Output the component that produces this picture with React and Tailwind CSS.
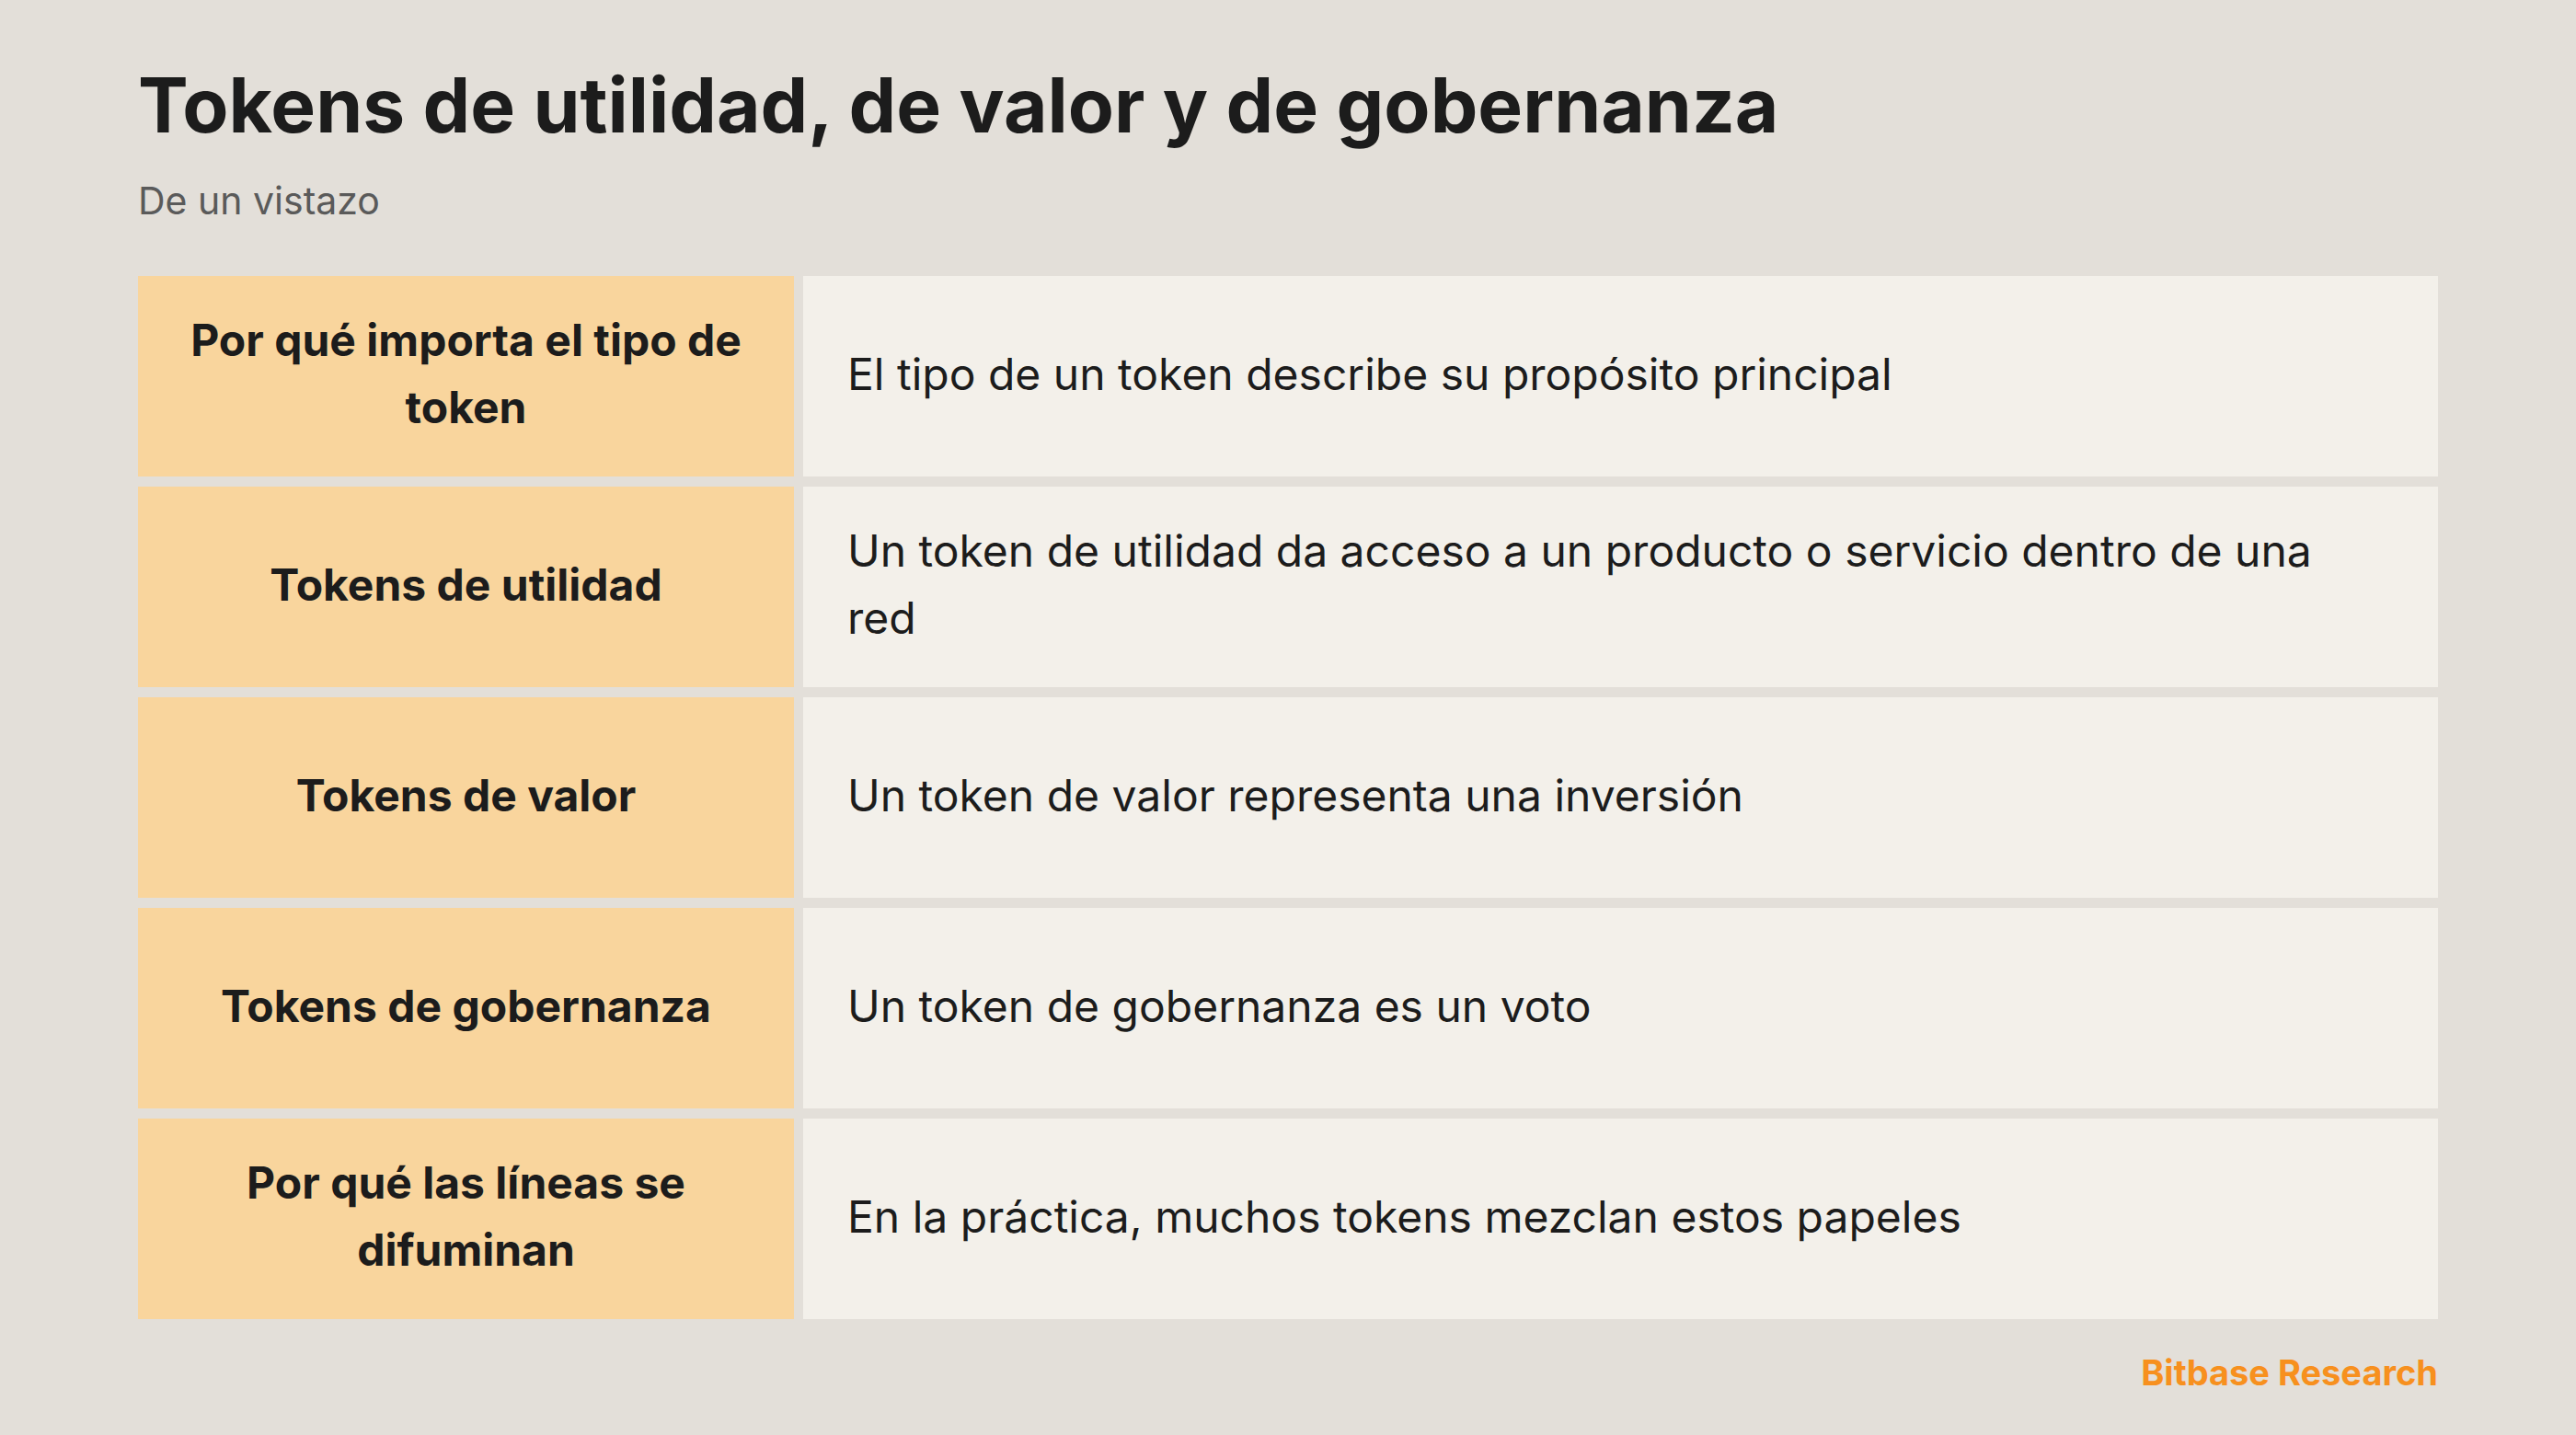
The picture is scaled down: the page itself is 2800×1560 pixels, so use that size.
import React from 'react';

const rows = [
  ['Por qué importa el tipo de token', 'El tipo de un token describe su propósito principal'],
  ['Tokens de utilidad', 'Un token de utilidad da acceso a un producto o servicio dentro de una red'],
  ['Tokens de valor', 'Un token de valor representa una inversión'],
  ['Tokens de gobernanza', 'Un token de gobernanza es un voto'],
  ['Por qué las líneas se difuminan', 'En la práctica, muchos tokens mezclan estos papeles'],
];

export default function App() {
  return (
    <div className="w-[2800px] h-[1560px] bg-[#e3dfd9] px-[150px] pt-[66px] font-['Inter',sans-serif] text-[#1c1c1c]">
      <h1 className="text-[82px] leading-[98px] font-bold">Tokens de utilidad, de valor y de gobernanza</h1>
      <p className="mt-[26px] text-[41px] leading-[56px] text-[#5a5a5a]">De un vistazo</p>

      <div className="mt-[54px] grid grid-cols-[713px_1fr] gap-x-[10px] gap-y-[11px] auto-rows-[218px]">
        {rows.map(([label, text]) => (
          <React.Fragment key={label}>
            <div className="bg-[#f9d59d] flex items-center justify-center px-[40px] pb-[6px] text-center text-[48px] leading-[73px] font-bold">
              {label}
            </div>
            <div className="bg-[#f3f0ea] flex items-center pl-[48px] pr-[90px] pb-[6px] text-[48px] leading-[73px]">
              {text}
            </div>
          </React.Fragment>
        ))}
      </div>

      <div className="mt-[30px] flex justify-end">
        <span className="text-[38px] font-bold text-[#f7901e]">Bitbase Research</span>
      </div>
    </div>
  );
}
